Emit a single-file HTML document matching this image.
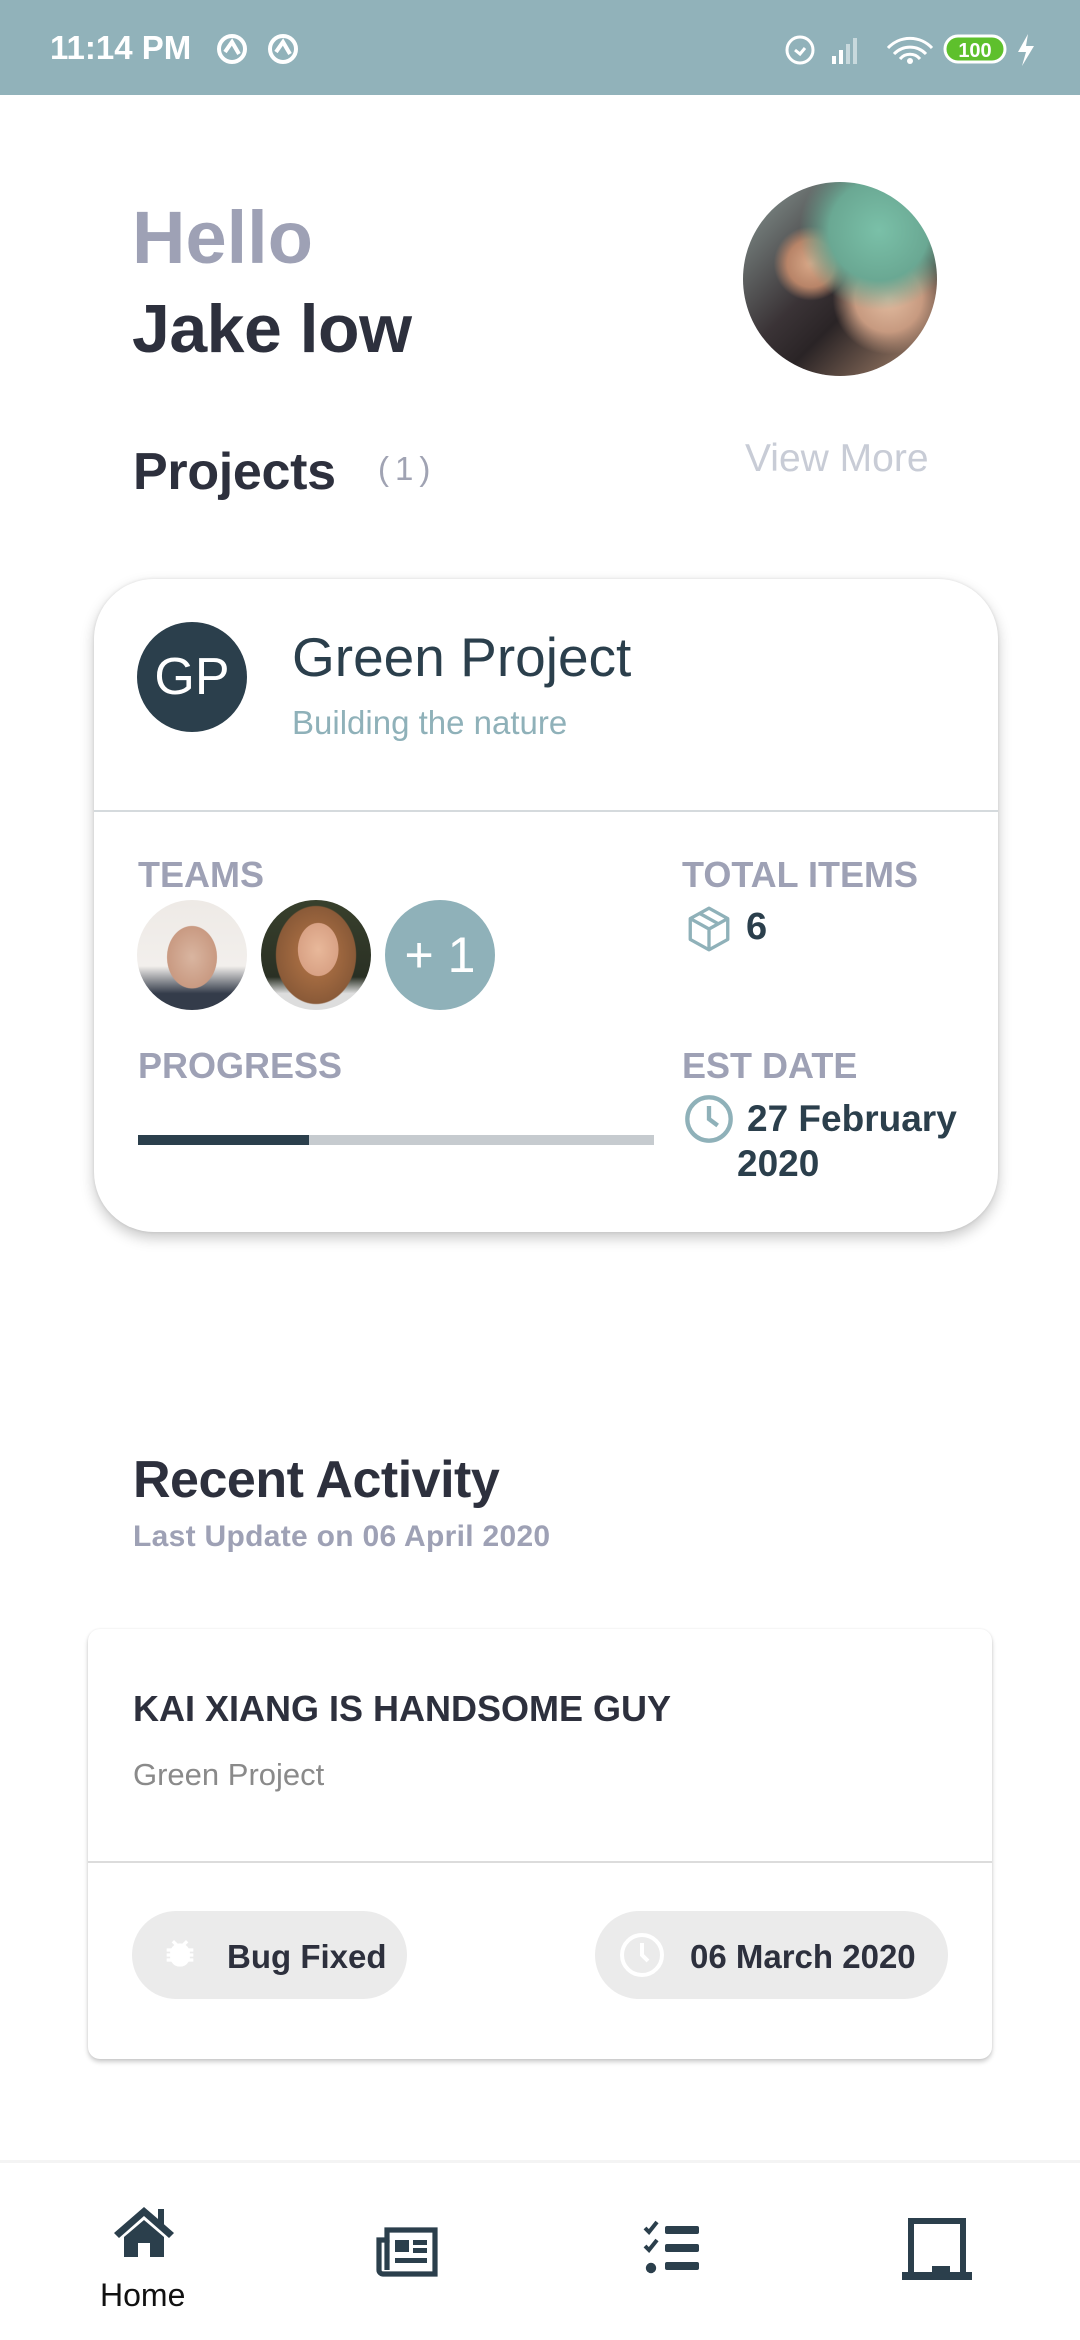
<!DOCTYPE html>
<html><head><meta charset="utf-8"><style>
*{margin:0;padding:0;box-sizing:border-box}
body{width:1080px;height:2340px;background:#fff;font-family:"Liberation Sans",Roboto,sans-serif;position:relative;overflow:hidden}
.a{position:absolute;white-space:nowrap}
.b{font-weight:bold}
</style></head><body>
<div class="a" style="left:0;top:0;width:1080px;height:95px;background:#91b2ba"></div>
<div class="a b" style="left:50px;top:29px;font-size:33px;color:#fff">11:14 PM</div>
<svg class="a" style="left:215px;top:32px" width="90" height="36" viewBox="0 0 90 36" fill="none" stroke="#fff" stroke-width="4"><circle cx="17" cy="17" r="13"/><path d="M10 20 L17 10 L24 22"/><circle cx="68" cy="17" r="13"/><path d="M61 20 L68 10 L75 22"/></svg>
<svg class="a" style="left:780px;top:28px" width="270" height="40" viewBox="0 0 270 40"><g fill="none" stroke="#fff" stroke-width="3"><circle cx="20" cy="22" r="13"/><path d="M15 22l5 4 5-6"/><path d="M34 28a22 22 0 0 1 32 0M40 33a13 13 0 0 1 20 0M28 22a30 30 0 0 1 44 0" transform="translate(80 -2)"/></g><g fill="#fff"><rect x="52" y="28" width="4" height="8"/><rect x="59" y="22" width="4" height="14"/><rect x="66" y="16" width="4" height="20" opacity=".5"/><rect x="73" y="10" width="4" height="26" opacity=".5"/><circle cx="130" cy="33" r="3"/></g><rect x="165" y="8" width="60" height="26" rx="13" fill="#5ec02c" stroke="#fff" stroke-width="3"/><text x="195" y="29" font-size="20" font-weight="bold" fill="#fff" text-anchor="middle" font-family="Liberation Sans">100</text><path d="M248 6l-10 18h8l-4 14 12-20h-8z" fill="#fff"/></svg>

<div class="a b" style="left:132px;top:195px;font-size:74px;color:#9ea1b5">Hello</div>
<div class="a b" style="left:132px;top:290px;font-size:68px;color:#2d303d;letter-spacing:-0.5px">Jake low</div>
<div class="a" style="left:743px;top:182px;width:194px;height:194px;border-radius:50%;background:radial-gradient(circle at 70% 25%,#7ac0a8 0,#6aa893 25%,transparent 40%),radial-gradient(circle at 75% 60%,#e2bca0 0,#c79a80 18%,transparent 30%),radial-gradient(circle at 35% 42%,#d8a888 0,#b88468 14%,transparent 22%),linear-gradient(135deg,#8a9a96 0,#3a3336 45%,#2a2426 60%,#b08a70 100%)"></div>
<div class="a b" style="left:133px;top:442px;font-size:52px;color:#2d303d;letter-spacing:-0.3px">Projects</div>
<div class="a" style="left:378px;top:450px;font-size:33px;color:#a0a3b3;letter-spacing:6px">(1)</div>
<div class="a" style="left:745px;top:437px;font-size:39px;color:#c8ccd6">View More</div>

<div class="a" style="left:94px;top:579px;width:904px;height:653px;border-radius:60px;background:#fff;box-shadow:0 6px 14px rgba(0,0,0,.22),0 0 3px rgba(0,0,0,.1)"></div>
<div class="a" style="left:137px;top:622px;width:110px;height:110px;border-radius:50%;background:#2b3f4c;color:#fff;font-size:52px;text-align:center;line-height:110px">GP</div>
<div class="a" style="left:292px;top:625px;font-size:55px;color:#2b3f4c">Green Project</div>
<div class="a" style="left:292px;top:704px;font-size:33px;color:#8fb1b9">Building the nature</div>
<div class="a" style="left:94px;top:810px;width:904px;height:2px;background:#d5dadd"></div>
<div class="a b" style="left:138px;top:854px;font-size:36px;color:#9ea1b5">TEAMS</div>
<div class="a" style="left:137px;top:900px;width:110px;height:110px;border-radius:50%;background:radial-gradient(ellipse 32% 40% at 50% 52%,#d9b5a0 0,#c99a82 70%,transparent 72%),linear-gradient(180deg,#eeeae6 0,#f2efec 60%,#343c4a 85%)"></div>
<div class="a" style="left:261px;top:900px;width:110px;height:110px;border-radius:50%;background:radial-gradient(ellipse 26% 34% at 52% 45%,#e8b89a 0,#d9a285 70%,transparent 72%),radial-gradient(ellipse 45% 55% at 50% 50%,#b87848 0,#8a5a38 80%,transparent 82%),linear-gradient(180deg,#38402c,#2a3024 70%,#ddd 85%)"></div>
<div class="a" style="left:385px;top:900px;width:110px;height:110px;border-radius:50%;background:#8fb1b9;color:#fff;font-size:50px;text-align:center;line-height:110px">+ 1</div>
<div class="a b" style="left:682px;top:854px;font-size:36px;color:#9ea1b5">TOTAL ITEMS</div>
<svg class="a" style="left:684px;top:904px" width="50" height="50" viewBox="0 0 24 24" fill="none" stroke="#8fb1b9" stroke-width="1.6" stroke-linejoin="round"><path d="M12 2l9 5v10l-9 5-9-5V7z"/><path d="M3 7l9 5 9-5M12 12v10M7.5 4.5l9 5"/></svg>
<div class="a b" style="left:746px;top:906px;font-size:38px;color:#2b3f4c">6</div>
<div class="a b" style="left:138px;top:1045px;font-size:36px;color:#9ea1b5">PROGRESS</div>
<div class="a" style="left:138px;top:1135px;width:516px;height:10px;background:#c6cbcf"></div>
<div class="a" style="left:138px;top:1135px;width:171px;height:10px;background:#2b3f4c"></div>
<div class="a b" style="left:682px;top:1045px;font-size:36px;color:#9ea1b5">EST DATE</div>
<svg class="a" style="left:683px;top:1093px" width="52" height="52" viewBox="0 0 24 24" fill="none" stroke="#8fb1b9" stroke-width="2"><circle cx="12" cy="12" r="10"/><path d="M12 6v6l4 3"/></svg>
<div class="a b" style="left:747px;top:1098px;font-size:37px;color:#2b3f4c">27 February</div>
<div class="a b" style="left:737px;top:1143px;font-size:37px;color:#2b3f4c">2020</div>

<div class="a b" style="left:133px;top:1450px;font-size:52px;color:#2d303d;letter-spacing:-0.5px">Recent Activity</div>
<div class="a b" style="left:133px;top:1520px;font-size:30px;color:#9ea1b5;letter-spacing:0.3px">Last Update on 06 April 2020</div>

<div class="a" style="left:88px;top:1629px;width:904px;height:430px;border-radius:12px;background:#fff;box-shadow:0 3px 5px rgba(0,0,0,.2),0 0 2px rgba(0,0,0,.08)"></div>
<div class="a b" style="left:133px;top:1688px;font-size:36px;color:#2d303d">KAI XIANG IS HANDSOME GUY</div>
<div class="a" style="left:133px;top:1757px;font-size:31px;color:#8a8a8a">Green Project</div>
<div class="a" style="left:88px;top:1861px;width:904px;height:2px;background:#dcdcdc"></div>
<div class="a" style="left:132px;top:1911px;width:275px;height:88px;border-radius:44px;background:#ebebeb"></div>
<svg class="a" style="left:160px;top:1935px" width="40" height="40" viewBox="0 0 24 24" fill="#fff"><path d="M20 8h-2.8a6 6 0 0 0-1.8-2l1.6-1.6-1.4-1.4-2.2 2.2a6 6 0 0 0-2.8 0L8.4 3 7 4.4 8.6 6a6 6 0 0 0-1.8 2H4v2h2.1a6 6 0 0 0 0 1H4v2h2.1v1H4v2h2.8A6 6 0 0 0 17.2 16H20v-2h-2.1v-1H20v-2h-2.1a6 6 0 0 0 0-1H20z"/></svg>
<div class="a b" style="left:227px;top:1938px;font-size:33px;color:#2d303d">Bug Fixed</div>
<div class="a" style="left:595px;top:1911px;width:353px;height:88px;border-radius:44px;background:#ebebeb"></div>
<svg class="a" style="left:618px;top:1931px" width="48" height="48" viewBox="0 0 24 24" fill="none" stroke="#fff" stroke-width="2"><circle cx="12" cy="12" r="10"/><path d="M12 6v6l3 3"/></svg>
<div class="a b" style="left:690px;top:1938px;font-size:33px;color:#2d303d">06 March 2020</div>

<div class="a" style="left:0;top:2160px;width:1080px;height:180px;background:#fff;border-top:3px solid #f4f4f4"></div>
<svg class="a" style="left:112px;top:2203px" width="64" height="56" viewBox="0 0 32 28" fill="#2b3f4c"><path d="M16 2L1 15l2.5 2.5L16 6.5 28.5 17.5 31 15l-5-4.4V3h-3v5L16 2z"/><path d="M6 17l10-8.5L26 17v10h-7v-7h-6v7H6z"/></svg>
<svg class="a" style="left:375px;top:2224px" width="64" height="54" viewBox="0 0 32 27" fill="none" stroke="#2b3f4c" stroke-width="2.6"><path d="M6 3h24v22H4a2 2 0 0 1-2-2V8h4z"/><path d="M6 8v15"/><g fill="#2b3f4c" stroke="none"><rect x="10" y="8" width="7" height="6"/><rect x="19" y="8" width="7" height="2.5"/><rect x="19" y="12" width="7" height="2.5"/><rect x="10" y="17" width="16" height="2.5"/></g></svg>
<svg class="a" style="left:643px;top:2220px" width="58" height="56" viewBox="0 0 29 28" fill="#2b3f4c"><path d="M1 4l2 2 4-5" stroke="#2b3f4c" stroke-width="2" fill="none"/><path d="M1 13l2 2 4-5" stroke="#2b3f4c" stroke-width="2" fill="none"/><circle cx="4" cy="24" r="2.6"/><rect x="11" y="3" width="17" height="4" rx="1"/><rect x="11" y="12" width="17" height="4" rx="1"/><rect x="11" y="21" width="17" height="4" rx="1"/></svg>
<svg class="a" style="left:902px;top:2218px" width="70" height="62" viewBox="0 0 35 31" fill="#2b3f4c"><path d="M3 0h29v27h-3V3H6v24H3z"/><rect x="0" y="27" width="35" height="4"/><rect x="15" y="24" width="9" height="4"/></svg>
<div class="a" style="left:100px;top:2277px;font-size:32px;color:#111">Home</div>
</body></html>
